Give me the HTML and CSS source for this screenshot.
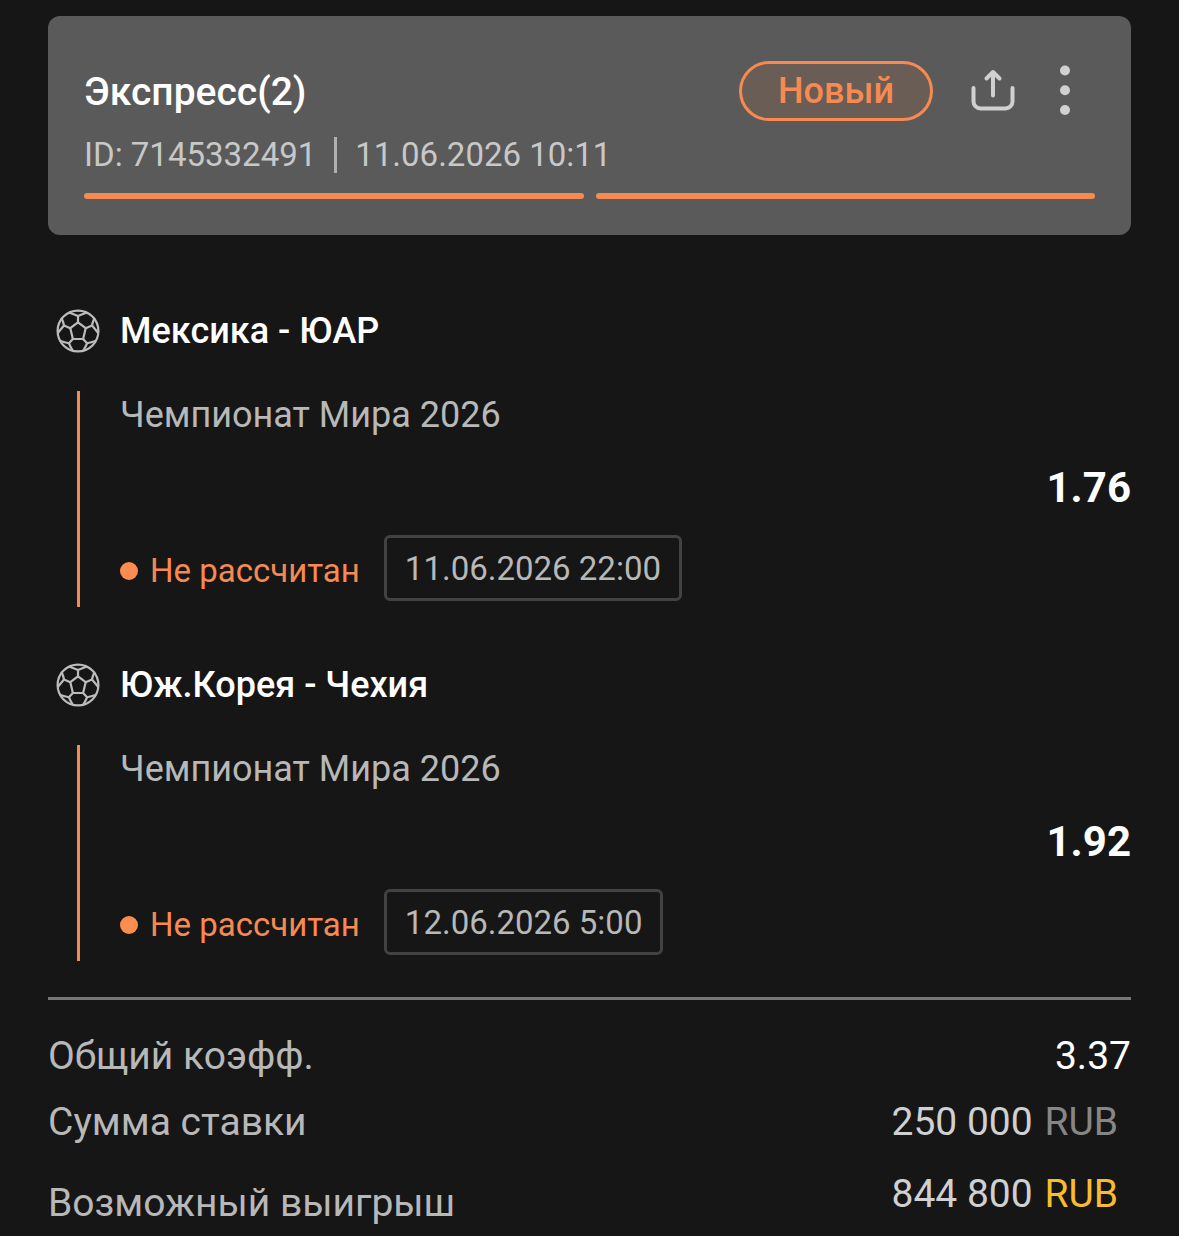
FILE: index.html
```html
<!DOCTYPE html>
<html lang="ru">
<head>
    <meta charset="UTF-8">
    <meta name="viewport" content="width=device-width, initial-scale=1">
    <title>Экспресс(2)</title>
    <link rel="stylesheet" href="styles.css">
</head>
<body>
    <svg class="sprite" aria-hidden="true">
        <symbol id="ball" viewBox="0 0 44 44">
            <g fill="none" stroke="currentColor" stroke-width="2.2" stroke-linejoin="round" stroke-linecap="round">
                <circle cx="22" cy="22" r="20.4"/>
                <path d="M22 13.300l7.700 5.900-2.600 10.800H16.900l-2.600-10.800z"/>
                <path d="M22 13.300V7M29.700 19.200l6.300-2.700M27.100 30l4 4.300M16.900 30l-4 4.300M14.300 19.200L8 16.500"/>
                <path d="M13.500 3.800Q17.500 5 22 7q4.500-2 8.500-3.200"/>
                <path d="M38.300 9.500Q36.600 13 36 16.500q3 3.500 5.800 7"/>
                <path d="M5.700 9.500Q7.400 13 8 16.500q-3 3.500-5.800 7"/>
                <path d="M39.500 32q-4.200 1.300-8.400 2.300-1.600 3.700-3.600 7"/>
                <path d="M4.500 32q4.200 1.300 8.400 2.300 1.600 3.700 3.600 7"/>
            </g>
        </symbol>
    </svg>

    <main class="coupon">
        <header class="card">
            <div class="card-top">
                <h1 class="title">Экспресс(2)</h1>
                <span class="badge">Новый</span>
                <button class="icon-btn share" type="button" aria-label="Поделиться">
                    <svg width="44" height="44" viewBox="0 0 44 44" fill="none" stroke="currentColor" stroke-width="4" stroke-linecap="round" stroke-linejoin="round">
                        <path d="M2.500 19v13.500a7 7 0 0 0 7 7h25a7 7 0 0 0 7-7V19"/>
                        <path d="M22 26.500V3M15.500 9.500L22 3l6.500 6.500"/>
                    </svg>
                </button>
                <button class="icon-btn more" type="button" aria-label="Ещё">
                    <svg width="12" height="52" viewBox="0 0 12 52" fill="currentColor">
                        <circle cx="6" cy="5.500" r="5"/>
                        <circle cx="6" cy="25.300" r="5"/>
                        <circle cx="6" cy="45" r="5"/>
                    </svg>
                </button>
            </div>
            <div class="meta">
                <span>ID: 7145332491</span>
                <time class="meta-date">11.06.2026 10:11</time>
            </div>
            <div class="progress">
                <span></span>
                <span></span>
            </div>
        </header>

        <section class="event">
            <h2 class="event-name">
                <svg class="ball"><use href="#ball"/></svg>
                Мексика - ЮАР
            </h2>
            <div class="event-body">
                <p class="league">Чемпионат Мира 2026</p>
                <p class="odds">1.76</p>
                <div class="state">
                    <span class="status">Не рассчитан</span>
                    <time class="date">11.06.2026 22:00</time>
                </div>
            </div>
        </section>

        <section class="event">
            <h2 class="event-name">
                <svg class="ball"><use href="#ball"/></svg>
                Юж.Корея - Чехия
            </h2>
            <div class="event-body">
                <p class="league">Чемпионат Мира 2026</p>
                <p class="odds">1.92</p>
                <div class="state">
                    <span class="status">Не рассчитан</span>
                    <time class="date">12.06.2026 5:00</time>
                </div>
            </div>
        </section>

        <dl class="totals">
            <div class="total">
                <dt>Общий коэфф.</dt>
                <dd class="coef">3.37</dd>
            </div>
            <div class="total">
                <dt>Сумма ставки</dt>
                <dd class="money">250 000 <span class="cur">RUB</span></dd>
            </div>
            <div class="total win">
                <dt>Возможный выигрыш</dt>
                <dd class="money">844 800 <span class="cur">RUB</span></dd>
            </div>
        </dl>
    </main>
</body>
</html>
```
FILE: styles.css
```css
* {
    margin: 0;
    padding: 0;
    box-sizing: border-box;
}

body {
    background: #161616;
    color: #fff;
    font-family: Roboto, "Noto Sans", sans-serif;
}

.sprite {
    display: none;
}

.coupon {
    padding: 16px 48px 0;
}

/* header card */
.card {
    padding: 45px 36px 36px;
    border-radius: 12px;
    background: #5a5a5a;
}

.card-top {
    display: flex;
    align-items: center;
    height: 60px;
}

.title {
    flex: 1;
    padding-top: 2px;
    font-size: 39px;
    font-weight: 500;
    line-height: 48px;
}

.badge {
    padding: 0 36px;
    border: 3px solid #f68a50;
    border-radius: 30px;
    background: #6a5d56;
    color: #f68a50;
    font-size: 36px;
    font-weight: 500;
    line-height: 54px;
}

.icon-btn {
    display: flex;
    border: none;
    background: none;
    color: #d0d0d0;
    cursor: pointer;
}

.share {
    margin-left: 38px;
}

.more {
    margin: 0 24px 0 44px;
}

.meta {
    display: flex;
    align-items: center;
    margin-top: 12px;
    color: #c8c8c8;
    font-size: 33px;
    line-height: 44px;
}

.meta-date {
    display: flex;
    align-items: center;
}

.meta-date::before {
    content: "";
    width: 3px;
    height: 36px;
    margin: 0 18px;
    background: #b0b0b0;
}

.progress {
    display: flex;
    gap: 12px;
    margin-top: 16px;
}

.progress span {
    flex: 1;
    height: 6px;
    border-radius: 3px;
    background: #f68a50;
}

/* events */
.event {
    margin-top: 54px;
}

.card + .event {
    margin-top: 72px;
}

.event-name {
    display: flex;
    align-items: center;
    gap: 20px;
    padding-left: 8px;
    font-size: 36px;
    font-weight: 500;
    line-height: 48px;
}

.ball {
    width: 44px;
    height: 44px;
    color: #bcbcbc;
}

.event-body {
    margin: 36px 0 0 29px;
    padding: 0 0 4px 40px;
    border-left: 3px solid #f68a50;
}

.league {
    color: #b8b8b8;
    font-size: 36px;
    line-height: 48px;
}

.odds {
    margin: 24px 0 20px;
    font-size: 42px;
    font-weight: 700;
    line-height: 50px;
    text-align: right;
}

.state {
    display: flex;
    align-items: center;
    gap: 24px;
    height: 70px;
    font-size: 33px;
}

.status {
    display: flex;
    align-items: center;
    gap: 12px;
    padding-top: 6px;
    color: #f68a50;
    line-height: 66px;
}

.status::before {
    content: "";
    width: 18px;
    height: 18px;
    border-radius: 50%;
    background: #fc8c50;
}

.date {
    padding: 2px 18px 0;
    border: 3px solid #424242;
    border-radius: 6px;
    color: #b8b8b8;
    line-height: 58px;
}

/* totals */
.totals {
    margin-top: 36px;
    padding-top: 32px;
    border-top: 3px solid #777;
    font-size: 39px;
    line-height: 48px;
}

.total {
    display: flex;
    justify-content: space-between;
    margin-bottom: 18px;
}

.total dt {
    color: #b8b8b8;
}

.money {
    padding-right: 13px;
    color: #d0d0d0;
}

.cur {
    margin-left: 2px;
    color: #868686;
}

.win {
    margin: 24px 0 0;
}

.win dt {
    padding-top: 9px;
}

.win .cur {
    color: #f8bc2c;
}
```
